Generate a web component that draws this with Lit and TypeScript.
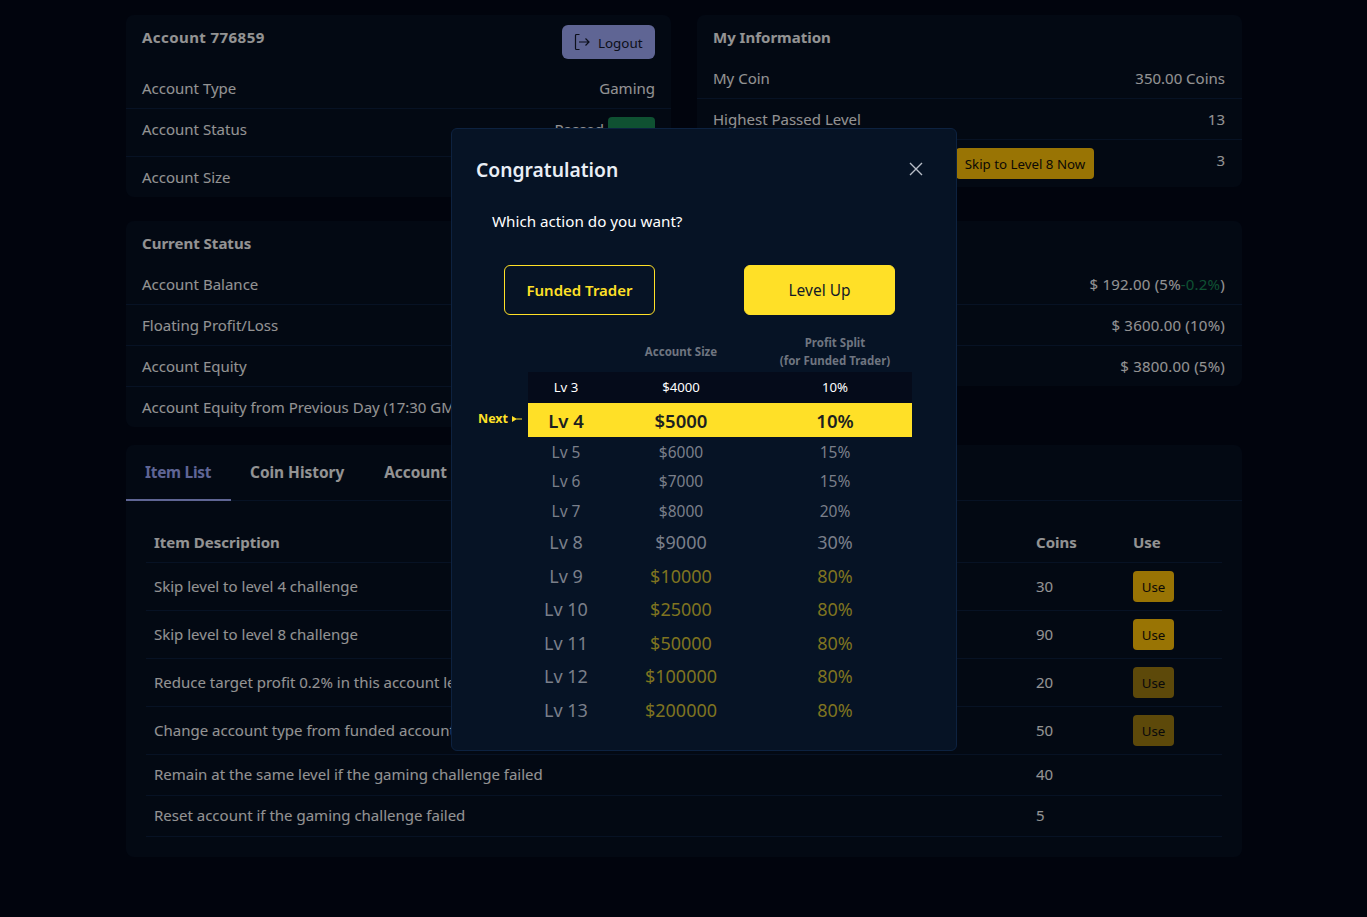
import { LitElement, html, css } from "lit";
import { customElement } from "lit/decorators.js";

const LEVELS = [
  { lv: "Lv 3", size: "$4000", split: "10%", cls: "done" },
  { lv: "Lv 4", size: "$5000", split: "10%", cls: "next" },
  { lv: "Lv 5", size: "$6000", split: "15%", cls: "small" },
  { lv: "Lv 6", size: "$7000", split: "15%", cls: "small" },
  { lv: "Lv 7", size: "$8000", split: "20%", cls: "small" },
  { lv: "Lv 8", size: "$9000", split: "30%", cls: "large" },
  { lv: "Lv 9", size: "$10000", split: "80%", cls: "large gold" },
  { lv: "Lv 10", size: "$25000", split: "80%", cls: "large gold" },
  { lv: "Lv 11", size: "$50000", split: "80%", cls: "large gold" },
  { lv: "Lv 12", size: "$100000", split: "80%", cls: "large gold" },
  { lv: "Lv 13", size: "$200000", split: "80%", cls: "large gold" },
];

const ITEMS = [
  { name: "Skip level to level 4 challenge", coins: 30, use: "on" },
  { name: "Skip level to level 8 challenge", coins: 90, use: "on" },
  { name: "Reduce target profit 0.2% in this account level", coins: 20, use: "off" },
  { name: "Change account type from funded account", coins: 50, use: "off" },
  { name: "Remain at the same level if the gaming challenge failed", coins: 40, use: "" },
  { name: "Reset account if the gaming challenge failed", coins: 5, use: "" },
];

@customElement("app-root")
class AppRoot extends LitElement {
  static override styles = css`
    :host {
      display: block;
      min-height: 917px;
      background: #020816;
      font-family: "Noto Sans", "Open Sans", sans-serif;
      font-size: 15px;
      line-height: 22px;
      color: #f5f5f5;
    }

    .page {
      padding: 15px 125px 60px 126px;
    }

    .top {
      display: grid;
      grid-template-columns: 545px 545px;
      column-gap: 26px;
      row-gap: 24px;
      align-items: start;
    }

    .card {
      background: #060f21;
      border-radius: 8px;
    }

    .title {
      padding: 11px 16px 10px;
      font-weight: 700;
    }

    .head {
      display: flex;
      justify-content: space-between;
      align-items: flex-start;
      padding: 10px 16px 9px;
    }

    .head .name {
      font-weight: 700;
      margin-top: 1px;
      letter-spacing: 0.43px;
    }

    .logout {
      display: flex;
      align-items: center;
      gap: 7px;
      height: 34px;
      width: 93px;
      box-sizing: border-box;
      padding: 0 11px;
      border-radius: 6px;
      background: #9ea8f7;
      color: #14192e;
      font-size: 13.4px;
    }

    .logout span {
      margin-top: 1px;
    }

    .row {
      display: flex;
      justify-content: space-between;
      align-items: flex-start;
      padding: 9px 16px;
      border-bottom: 1px solid #0d1f3c;
    }

    .row:last-child {
      border-bottom: none;
    }

    .right .row {
      padding-right: 17px;
    }

    .money {
      letter-spacing: 0.2px;
    }

    .btn {
      box-sizing: border-box;
      height: 31px;
      border-radius: 4px;
      background: #ffc107;
      color: #14100a;
      font-size: 13.3px;
      line-height: 32px;
      text-align: center;
    }

    .status-val {
      display: flex;
      gap: 4px;
    }

    .badge {
      width: 47px;
      height: 31px;
      margin: -1px 0 -1px;
      border-radius: 4px;
      background: #198754;
    }

    .skip {
      width: 138px;
      margin: -1px auto -1px 243px;
      padding: 0 8px;
      white-space: nowrap;
    }

    .loss {
      color: #198754;
    }

    .lower {
      margin-top: 18px;
      padding-bottom: 20px;
    }

    .tabs {
      display: flex;
      height: 56px;
      box-sizing: border-box;
      border-bottom: 1px solid #0d1f3c;
      font-weight: 700;
      font-size: 15.4px;
      white-space: nowrap;
    }

    .tab {
      padding: 17px 21px 0 19px;
    }

    .tab.active {
      width: 105px;
      height: 56px;
      box-sizing: border-box;
      letter-spacing: -0.25px;
      color: #9ea8f7;
      border-bottom: 2px solid #9ea8f7;
    }

    .items {
      width: 1076px;
      margin: 21px 20px 0;
      border-collapse: collapse;
      table-layout: fixed;
    }

    .items th,
    .items td {
      padding: 9px 8px;
      text-align: left;
      vertical-align: middle;
      border-bottom: 1px solid #0d1f3c;
    }

    .items td {
      padding: 8px 8px 10px;
    }

    .items td.has-btn {
      padding-top: 8px;
      padding-bottom: 8px;
    }

    .use {
      width: 41px;
    }

    .use.off {
      opacity: 0.6;
    }

    .overlay {
      position: fixed;
      inset: 0;
      background: rgba(0, 0, 0, 0.4);
      padding: 128px 0 0 451px;
      box-sizing: border-box;
    }

    .modal {
      width: 506px;
      height: 623px;
      box-sizing: border-box;
      padding: 27px 44px 0 24px;
      background: #061325;
      border: 1px solid #0d2240;
      border-radius: 6px;
      color: #fff;
    }

    .modal-head {
      display: flex;
      justify-content: space-between;
      align-items: center;
      height: 28px;
      font-size: 19.3px;
      font-weight: 600;
      color: #e9eef5;
    }

    .close {
      display: block;
      margin: 0 -11px 2px 0;
    }

    .question {
      margin: 25px 0 0 16px;
      font-size: 15.2px;
      line-height: 24px;
    }

    .choices {
      display: flex;
      gap: 89px;
      margin: 32px 0 0 28px;
    }

    .choice {
      width: 151px;
      height: 50px;
      box-sizing: border-box;
      border-radius: 6px;
      border: 1px solid #ffe027;
      font-size: 15px;
      line-height: 48px;
      text-align: center;
    }

    .choice.outline {
      color: #ffe027;
      font-weight: 600;
    }

    .choice.solid {
      background: #ffe027;
      color: #131a26;
      font-size: 15.5px;
    }

    .levels {
      width: 384px;
      margin: 18px 0 0 52px;
      border-collapse: collapse;
      table-layout: fixed;
    }

    .levels th {
      height: 39px;
      padding: 1px 0 2px;
      box-sizing: border-box;
      font-size: 11.5px;
      line-height: 18px;
      font-weight: 700;
      color: #6f7580;
      text-align: center;
      vertical-align: middle;
    }

    .levels td {
      padding: 0;
      text-align: center;
      vertical-align: middle;
    }

    tr.done td {
      height: 31px;
      box-sizing: border-box;
      padding-bottom: 2px;
      background: #050b1a;
      font-size: 13.2px;
    }

    tr.next td {
      height: 34px;
      box-sizing: border-box;
      padding-top: 1px;
      background: #ffe027;
      color: #1c1f20;
      font-size: 18.5px;
      font-weight: 600;
    }

    tr.small td {
      height: 29.5px;
      font-size: 15.5px;
      color: #7a7f8a;
    }

    tr.large td {
      height: 33.5px;
      font-size: 18px;
      color: #7a7f8a;
    }

    tr.gold td + td {
      color: #7f7320;
    }

    .next-cell {
      position: relative;
    }

    .next-label {
      position: absolute;
      right: 100%;
      top: 7px;
      margin-right: 6px;
      display: flex;
      align-items: center;
      gap: 4px;
      white-space: nowrap;
      font-size: 12.5px;
      font-weight: 700;
      line-height: 18px;
      color: #ffe027;
    }
  `;

  override render() {
    return html`
      <div class="page">
        <div class="top">
          <section class="card">
            <div class="head">
              <span class="name">Account 776859</span>
              <div class="logout">
                <svg width="18" height="18" viewBox="0 0 18 18" fill="none" stroke="currentColor" stroke-width="1.2">
                  <path d="M6.5 1.5H3.5a1 1 0 0 0-1 1v13a1 1 0 0 0 1 1h3" />
                  <path d="M6 9h10M12.5 5.5 16 9l-3.5 3.5" />
                </svg>
                <span>Logout</span>
              </div>
            </div>
            <div class="row"><span>Account Type</span><span>Gaming</span></div>
            <div class="row">
              <span>Account Status</span>
              <span class="status-val"><span>Passed</span><span class="badge"></span></span>
            </div>
            <div class="row"><span>Account Size</span></div>
          </section>

          <section class="card right">
            <div class="title">My Information</div>
            <div class="row"><span>My Coin</span><span>350.00 Coins</span></div>
            <div class="row"><span>Highest Passed Level</span><span>13</span></div>
            <div class="row">
              <div class="btn skip">Skip to Level 8 Now</div>
              <span>3</span>
            </div>
          </section>

          <section class="card">
            <div class="title">Current Status</div>
            <div class="row"><span>Account Balance</span></div>
            <div class="row"><span>Floating Profit/Loss</span></div>
            <div class="row"><span>Account Equity</span></div>
            <div class="row"><span>Account Equity from Previous Day (17:30 GMT)</span></div>
          </section>

          <section class="card right">
            <div class="title">&nbsp;</div>
            <div class="row">
              <span></span>
              <span class="money">$ 192.00 (5%<span class="loss">-0.2%</span>)</span>
            </div>
            <div class="row"><span></span><span class="money">$ 3600.00 (10%)</span></div>
            <div class="row"><span></span><span class="money">$ 3800.00 (5%)</span></div>
          </section>
        </div>

        <section class="card lower">
          <div class="tabs">
            <div class="tab active">Item List</div>
            <div class="tab">Coin History</div>
            <div class="tab">Account</div>
          </div>
          <table class="items">
            <colgroup>
              <col style="width: 882px" />
              <col style="width: 97px" />
              <col style="width: 97px" />
            </colgroup>
            <thead>
              <tr><th>Item Description</th><th>Coins</th><th>Use</th></tr>
            </thead>
            <tbody>
              ${ITEMS.map(
                (item) => html`
                  <tr>
                    <td>${item.name}</td>
                    <td>${item.coins}</td>
                    ${item.use
                      ? html`<td class="has-btn"><div class="btn use ${item.use}">Use</div></td>`
                      : html`<td></td>`}
                  </tr>
                `,
              )}
            </tbody>
          </table>
        </section>
      </div>

      <div class="overlay">
        <div class="modal">
          <div class="modal-head">
            <span>Congratulation</span>
            <svg class="close" width="14" height="14" viewBox="0 0 14 14" fill="none" stroke="#b8bec8" stroke-width="1.4">
              <path d="M1 1l12 12M13 1 1 13" />
            </svg>
          </div>
          <div class="question">Which action do you want?</div>
          <div class="choices">
            <div class="choice outline">Funded Trader</div>
            <div class="choice solid">Level Up</div>
          </div>
          <table class="levels">
            <colgroup>
              <col style="width: 76px" />
              <col style="width: 154px" />
              <col style="width: 154px" />
            </colgroup>
            <thead>
              <tr>
                <th></th>
                <th>Account Size</th>
                <th>Profit Split<br />(for Funded Trader)</th>
              </tr>
            </thead>
            <tbody>
              ${LEVELS.map(
                (l) => html`
                  <tr class=${l.cls}>
                    <td class="next-cell">
                      ${l.cls === "next"
                        ? html`<span class="next-label"
                            >Next
                            <svg width="10" height="6" viewBox="0 0 10 6" fill="#ffe027">
                              <path d="M0 0l5 3-5 3zM4 2.4h6v1.2H4z" />
                            </svg></span
                          >`
                        : ""}
                      ${l.lv}
                    </td>
                    <td>${l.size}</td>
                    <td>${l.split}</td>
                  </tr>
                `,
              )}
            </tbody>
          </table>
        </div>
      </div>
    `;
  }
}

// Prevent tree-shaking
void AppRoot;
